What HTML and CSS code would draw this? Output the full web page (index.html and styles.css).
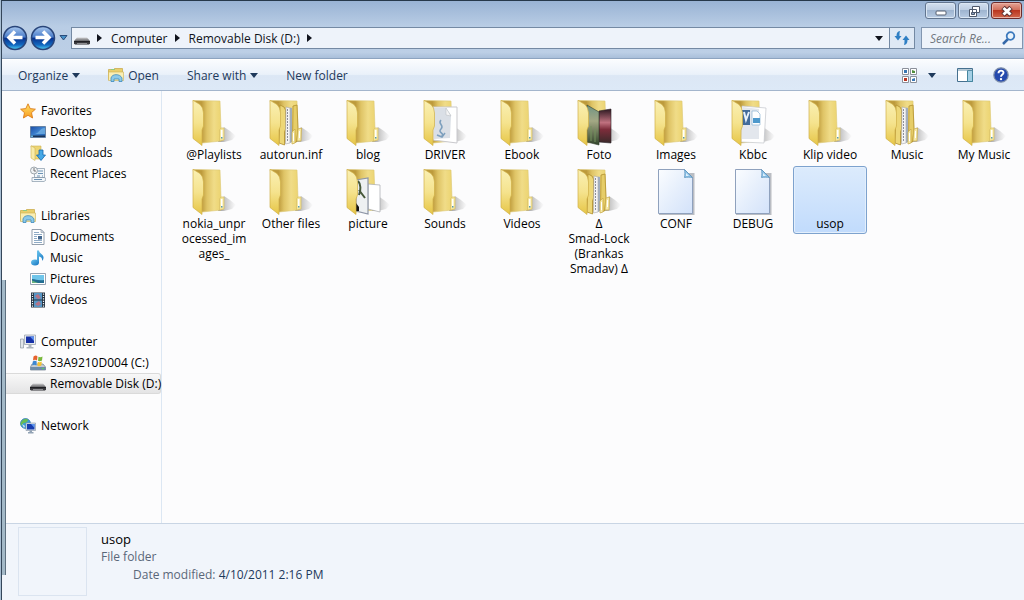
FILE: index.html
```html
<!DOCTYPE html>
<html lang="en">
<head>
<meta charset="utf-8">
<title>Removable Disk (D:)</title>
<link rel="stylesheet" href="styles.css">
</head>
<body>
<svg class="sprite" aria-hidden="true">
  <defs>
    <linearGradient id="gFlap" x1="0" y1="0" x2="0" y2="1"><stop offset="0" stop-color="#faf0b4"/><stop offset=".5" stop-color="#f5e38e"/><stop offset="1" stop-color="#e6c545"/></linearGradient>
    <linearGradient id="gBack" x1="0" y1="0" x2="1" y2="0"><stop offset=".3" stop-color="#bd9a3c"/><stop offset=".5" stop-color="#dfc466"/><stop offset=".75" stop-color="#f0dc88"/><stop offset="1" stop-color="#ecd470"/></linearGradient>
    <linearGradient id="gShade" x1="0" y1="0" x2="1" y2="0"><stop offset="0" stop-color="#666" stop-opacity=".7"/><stop offset=".4" stop-color="#888" stop-opacity=".45"/><stop offset="1" stop-color="#999" stop-opacity="0"/></linearGradient>
    <linearGradient id="gPage" x1="0" y1="0" x2="1" y2="1"><stop offset="0" stop-color="#fbfdff"/><stop offset=".5" stop-color="#e6effc"/><stop offset="1" stop-color="#d3e2fa"/></linearGradient>
    <linearGradient id="gBall" x1="0" y1="0" x2="0" y2="1"><stop offset="0" stop-color="#a9c8ee"/><stop offset=".45" stop-color="#4a7dcb"/><stop offset=".52" stop-color="#08338f"/><stop offset=".8" stop-color="#1268c0"/><stop offset="1" stop-color="#4fd2f5"/></linearGradient>
    <linearGradient id="gDrive" x1="0" y1="0" x2="0" y2="1"><stop offset="0" stop-color="#d0d0d2"/><stop offset=".4" stop-color="#77777a"/><stop offset="1" stop-color="#2c2c30"/></linearGradient>
    <linearGradient id="gScreen" x1="0" y1="0" x2="1" y2="1"><stop offset="0" stop-color="#1c4da6"/><stop offset=".5" stop-color="#3e82cf"/><stop offset="1" stop-color="#1d5fae"/></linearGradient>
    <linearGradient id="gStar" x1="0" y1="0" x2="0" y2="1"><stop offset="0" stop-color="#ffe36a"/><stop offset="1" stop-color="#f79a1e"/></linearGradient>
    <linearGradient id="gNote" x1="0" y1="0" x2="1" y2="1"><stop offset="0" stop-color="#6cc6ef"/><stop offset="1" stop-color="#1272bf"/></linearGradient>
    <linearGradient id="gFoto" x1="0" y1="0" x2="0" y2="1"><stop offset="0" stop-color="#6f9483"/><stop offset=".4" stop-color="#a3a884"/><stop offset="1" stop-color="#32452b"/></linearGradient>
    <linearGradient id="gRose" x1="0" y1="0" x2="0" y2="1"><stop offset="0" stop-color="#2c1820"/><stop offset=".4" stop-color="#c0717f"/><stop offset=".6" stop-color="#7d2d3b"/><stop offset="1" stop-color="#3a2a2a"/></linearGradient>
  </defs>
  <symbol id="back" viewBox="0 0 48 48">
    <path fill="url(#gShade)" d="M28 43 34 28 40 32 46 37 42 41 34 43z"/>
    <path fill="url(#gBack)" stroke="#dcc873" stroke-width=".6" d="M3 1.500 30 2 31 30 31 42 12 44z"/>
  </symbol>
  <symbol id="flap" viewBox="0 0 48 48">
    <path fill="url(#gFlap)" stroke="#d0b047" stroke-width=".7" d="M3 1.300 10 5.500 12.500 9 13.500 14 13.500 27 12 31 12 46.500 3 39.500z"/>
  </symbol>
  <symbol id="folder" viewBox="0 0 48 48">
    <use href="#back"/>
    <path fill="#f4e7a0" stroke="#d8bf60" stroke-width=".7" d="M29.500 42 29.500 31 31 29 34 29 34 41z"/><path fill="#fff" d="M31 31h1.500v8H31z"/><path fill="#5b9bb0" d="M31 38h1.500v1.500H31z"/>
    <use href="#flap"/>
  </symbol>
  <symbol id="folder-full" viewBox="0 0 48 48">
    <use href="#back"/>
    <path fill="#edd777" stroke="#b18f2f" stroke-width=".8" d="M13 6 17 8 18.500 11 18.500 30 17.500 33 17.500 46 12 44z"/>
    <path fill="#f4f4f5" stroke="#aaa" stroke-width=".6" d="M19 8 23 9 23 44 18.500 45z"/><path stroke="#8d8f9a" stroke-dasharray="2 1" d="M20.500 10v32"/>
    <path fill="#a2adba" d="M23 8.500 25 9 25 43 23 44z"/>
    <path fill="#e6cd67" stroke="#b18f2f" stroke-width=".8" d="M26 7 30 6 31 30 29.500 43 25.500 44z"/>
    <path fill="#f6eaaa" stroke="#c9a944" stroke-width=".7" d="M25 33 28 30 28 44 25 45zM31 30 34.500 29 34 42 30 42z"/><path stroke="#fff" d="M26.500 34v8M32.500 32v7"/>
    <use href="#flap"/>
  </symbol>
  <symbol id="folder-driver" viewBox="0 0 48 48">
    <use href="#back"/><path fill="#fff" stroke="#c9c9cd" d="M12 8 36 8 36 44 12 41z"/>
    <path fill="#dadfe6" d="M13 9 25 9 30 16 29 39 13 40z"/><path fill="#f5f5f6" stroke="#b5b8bd" stroke-width=".5" d="M25 9v7l5 1z"/>
    <path fill="none" stroke="#7d9fbd" stroke-width="1.500" d="M20 21c-4 4 4 5 0 9s5 4 0 8M16 36l5 2 3-4"/>
    <use href="#flap"/>
  </symbol>
  <symbol id="folder-foto" viewBox="0 0 48 48">
    <use href="#back"/><path fill="url(#gRose)" stroke="#292026" stroke-width=".6" d="M24 12 36 10 36 44 24 43z"/>
    <path fill="url(#gFoto)" stroke="#31402e" stroke-width=".6" d="M12 6 24 13 24 46 12 43z"/><path stroke="#75915e" d="M16 27v15M20 30v13"/>
    <use href="#flap"/>
  </symbol>
  <symbol id="folder-kbbc" viewBox="0 0 48 48">
    <use href="#back"/><path fill="#fff" stroke="#c3c6cb" stroke-width=".7" d="M13 7 37 9 35 44 12 43z"/>
    <path fill="#e3e7ed" d="M14 8 30 10 30 40 12 40z"/><path fill="#426b9a" d="M13 11h8v15h-8z"/><path fill="none" stroke="#e7f1fb" stroke-width="2" d="M15 13l2 8 3-8"/>
    <path fill="#fff" stroke="#8db5d4" stroke-width=".7" d="M23 12h5l3 3v11h-8z"/><path fill="#4e99cc" d="M24 19h7v5h-7z"/>
    <use href="#flap"/>
  </symbol>
  <symbol id="folder-picture" viewBox="0 0 48 48">
    <use href="#back"/><path fill="#fff" stroke="#a5a8ac" stroke-width=".7" d="M24 16 36 17 36 44 24 41z"/>
    <path fill="#edf0f2" stroke="#8e96a6" stroke-width="1.200" d="M12 12 24 10 24 46 12 43z"/><path fill="none" stroke="#46583a" stroke-width="2" d="M14 13c3 3 3 9 1 14M15 22l6 8"/><path fill="#111" d="M12 35l3 4v4h-3z"/>
    <use href="#flap"/>
  </symbol>
  <symbol id="file" viewBox="0 0 48 48">
    <path fill="#777d89" opacity=".5" d="M7 5h35.500v42H7z"/>
    <path fill="url(#gPage)" stroke="#8fa1bd" d="M6.500 1.500h26l8 8v36h-34z"/>
    <path fill="#8fc3e8" stroke="#5b93bd" stroke-width=".8" d="M32.500 1.500c.5 3 .5 5 0 8 3-.5 5-.5 8 0z"/><path fill="#dff1fc" d="M34 5l3 3h-3z"/>
  </symbol>
  <symbol id="drive" viewBox="0 0 16 16"><path fill="url(#gDrive)" d="M3 7.500h10l3 3.500v2.500l-1 1H1l-1-1V11z"/><path fill="#202024" d="M0 11h16v1.500H0z"/><path fill="#8c8c90" d="M3 13h10v1.500H3z"/></symbol>
  <symbol id="library" viewBox="0 0 16 16">
    <path fill="#e9cf6c" stroke="#c5a645" stroke-width=".7" d="M.500 2.500h5l1-1h8v11H.500z"/><path fill="#8fc97e" d="M3 2h4v1H3z"/><path fill="#faeeb4" stroke="#cdb050" stroke-width=".6" d="M.500 5h15v8.500H.500z"/>
    <path fill="#8cc9e9" stroke="#3c8abb" stroke-width=".8" d="M3 14.500V11c1-4.500 9-4.500 11 0v3.500h-3V12H6v2.500z"/>
  </symbol>
  <symbol id="star" viewBox="0 0 16 16"><path fill="url(#gStar)" stroke="#dd7d1b" stroke-width=".9" d="M8 .8 10.200 5.600 15.400 6.200 11.500 9.700 12.600 15 8 12.300 3.400 15 4.500 9.700.600 6.200 5.800 5.600z"/></symbol>
  <symbol id="desktop" viewBox="0 0 16 16"><path fill="url(#gScreen)" stroke="#6682a5" d="M.500 2.500h15v11H.500z"/><path fill="#79b8e8" opacity=".7" d="M15 4c-5 0-6 5-10 6h10z"/><path fill="#1a3458" d="M1 11.500h14V13H1z"/><path fill="#63b4de" d="M1 11.500h2V13H1z"/></symbol>
  <symbol id="downloads" viewBox="0 0 16 16"><path fill="#edd573" stroke="#cdb255" stroke-width=".6" d="M1 1h10v13H4z"/><path fill="#f8eba9" stroke="#cdb255" stroke-width=".6" d="M1 .8 5 3v12.500L1 13z"/><path fill="#45a8e6" stroke="#1467ad" stroke-width=".8" d="M9 5h4v5h2.500L11 15.500 6.500 10H9z"/></symbol>
  <symbol id="recent" viewBox="0 0 16 16"><path fill="#f3f7fa" stroke="#8596a7" stroke-width=".7" d="M4.500 2.500h10v9h-10zM2 11.500h13l1 2.500-2 1.500H2z"/><path stroke="#6b92b4" d="M8 5h5M8 7.500h5M7 10h3M12 10h1M4 13.500h8"/><circle cx="4" cy="4.500" r="3.500" fill="#eef1f3" stroke="#89939b" stroke-width=".8"/><path fill="none" stroke="#555" stroke-width=".8" d="M4 2v3h2"/></symbol>
  <symbol id="documents" viewBox="0 0 16 16"><path fill="#fff" stroke="#8995a4" stroke-width=".9" d="M2 .5h9l3 3v12H2z"/><path fill="#d5dde5" stroke="#8995a4" stroke-width=".6" d="M11 .5v3h3z"/><path stroke="#8fabc6" d="M4 3.500h5M4 5.500h8M4 7.500h3M4 9.500h3M4 11.500h8M4 13.500h8"/><path fill="#44688f" d="M8 7h4v3.500H8z"/></symbol>
  <symbol id="music" viewBox="0 0 16 16"><path fill="url(#gNote)" d="M7 .5h2c0 3 5 4 4.500 7.500 0 1-.5 2-1.500 3 .5-3-1-4-3-4.500v6.500H7z"/><ellipse cx="5" cy="12.500" rx="4" ry="3" fill="url(#gNote)"/></symbol>
  <symbol id="pictures" viewBox="0 0 16 16"><path fill="#fff" stroke="#8a98a8" stroke-width=".9" d="M.500 2.500h15v11H.500z"/><path fill="#6fc5ea" d="M2 4h12v8H2z"/><path fill="#226d91" d="M2 8c4 0 6 2 12 1v3H2z"/><path fill="#6ab480" d="M2 9.500l6 2.500H2z"/></symbol>
  <symbol id="videos" viewBox="0 0 16 16"><path fill="#263442" d="M1 .5h14v15H1z"/><path fill="#5696c5" d="M4 1h8v6.500H4zM4 8.500h8V15H4z"/><path fill="#b67386" d="M5 4l3-2 3 4-3 1zM5 12l4-3 2 3-3 2z"/><path stroke="#eef3f7" stroke-width="1.200" stroke-dasharray="1.200 1.200" d="M2.500 1.500v14M13.500 1.500v14"/></symbol>
  <symbol id="computer" viewBox="0 0 16 16"><path fill="#e1e5e9" stroke="#8e98a3" stroke-width=".7" d="M.500 5h3v9h-3z"/><path fill="#e8ecf0" stroke="#929ba6" stroke-width=".7" d="M4.500 1h11v9.500h-11z"/><path fill="#1731a8" d="M6 2.500h8V9H6z"/><path fill="#5b8ef0" d="M10 2.500h4V7z"/><path fill="#adb5be" d="M8.500 11h3v2h2v1.500h-7V13h2z"/></symbol>
  <symbol id="system" viewBox="0 0 16 16"><path fill="#c3cbd2" stroke="#6e7d8b" stroke-width=".7" d="M2 9h11l2.500 3v3H.500v-3z"/><path fill="#6f8ca8" d="M.500 12h15v3H.500z"/><path fill="#56cf61" d="M12 13h2v1h-2z"/><path fill="#e6622d" d="M3.500 1.500c2-1.500 3-1 4 0l-.5 4c-1-1-3-1-4 0z"/><path fill="#78b83b" d="M8.500 1.800c1 .7 3 .5 4-.3l-.5 4c-1 .8-3 1-4 .3z"/><path fill="#3c87d2" d="M2.800 6.500c1-1 3-1 4 0l-.5 4c-1-1-3-1-4 0z"/><path fill="#f5c232" d="M7.800 6.800c1 .7 3 .5 4-.3l-.5 4c-1 .8-3 1-4 .3z"/></symbol>
  <symbol id="network" viewBox="0 0 16 16"><circle cx="5.500" cy="5.500" r="5" fill="#3b9cda" stroke="#23689e" stroke-width=".6"/><path fill="#68bd54" d="M2 3c2-3 6-2 6-1S6 5 4 5 2 9 1 7s0-3 1-4z"/><path fill="#dee8ee" d="M2 6l3 2-1 2z"/><path fill="#dbe4ed" stroke="#8391a3" stroke-width=".6" d="M6 5h9.500v7.500H6z"/><path fill="#183dae" d="M7 6h7.500v5.500H7z"/><path fill="#5b95ef" d="M11 6h3.500v4z"/><path fill="#91a2b4" d="M9.500 12.500h2.500V14h1.500v1.500H8V14h1.500z"/></symbol>
  <symbol id="down" viewBox="0 0 8 5"><path fill="currentColor" d="M0 0h8L4 5z"/></symbol>
  <symbol id="right" viewBox="0 0 5 8"><path fill="currentColor" d="M0 0l5 4-5 4z"/></symbol>
</svg>

<div class="window">
  <header class="glass">
    <div class="caption">
      <button class="cap" aria-label="Minimize"><svg width="30" height="16" viewBox="0 0 30 16"><rect x="10" y="8" width="10" height="4" rx="1" fill="#fff" stroke="#555f70"/></svg></button>
      <button class="cap" aria-label="Restore"><svg width="30" height="16" viewBox="0 0 30 16"><path fill="#fff" stroke="#4d586b" d="M13.500 3.500h7v6h-7zM10.500 6.500h7v7h-7z"/><path fill="#8fa3bf" stroke="#4d586b" d="M12.500 9.500h3v2h-3z"/></svg></button>
      <button class="cap close" aria-label="Close"><svg width="30" height="16" viewBox="0 0 30 16"><path stroke="#5d3030" stroke-width="5" d="M11 4.500l8 7.500M19 4.500l-8 7.500"/><path stroke="#fff" stroke-width="3" d="M11.500 5l7 6.500M18.500 5l-7 6.500"/></svg></button>
    </div>
    <div class="navrow">
      <div class="travel">
        <button aria-label="Back"><svg width="26" height="26" viewBox="0 0 26 26"><circle cx="13" cy="13" r="11.500" fill="url(#gBall)" stroke="#29457a" stroke-width="1.500"/><path fill="none" stroke="#fff" stroke-width="3.500" d="M20.500 12.500H8M13 6.500l-6 6 6 6"/></svg></button>
        <button aria-label="Forward"><svg width="26" height="26" viewBox="0 0 26 26"><circle cx="13" cy="13" r="11.500" fill="url(#gBall)" stroke="#29457a" stroke-width="1.500"/><path fill="none" stroke="#fff" stroke-width="3.500" d="M5.500 12.500H18M13 6.500l6 6-6 6"/></svg></button>
        <button class="recent" aria-label="Recent pages"><svg width="9" height="6" viewBox="0 0 9 6"><path fill="#4791c8" stroke="#2a4d7c" d="M1 .5h7L4.500 5z"/></svg></button>
      </div>
      <nav class="address" aria-label="Address">
        <svg class="i16"><use href="#drive"/></svg>
        <svg class="right"><use href="#right"/></svg>
        <a href="#computer">Computer</a>
        <svg class="right"><use href="#right"/></svg>
        <a href="#disk">Removable Disk (D:)</a>
        <svg class="right"><use href="#right"/></svg>
        <button class="prev" aria-label="Previous locations"><svg class="down"><use href="#down"/></svg></button>
        <button class="refresh" aria-label="Refresh"><svg width="16" height="16" viewBox="0 0 16 16"><path fill="#2f7fc4" d="M6 1C3.500 1.500 2.500 3 2.500 6H.5l3.500 4.500L7.500 6h-2c0-2 0-3.500.5-5zM10 15c2.500-.5 3.500-2 3.500-5h2L12 5.500 8.500 10h2c0 2 0 3.500-.5 5z"/></svg></button>
      </nav>
      <div class="search">
        <input type="text" placeholder="Search Re..." aria-label="Search">
        <svg width="14" height="14" viewBox="0 0 14 14"><path stroke="#3569a9" stroke-width="2.500" d="M1 13l5-5"/><circle cx="8.500" cy="5" r="3.800" fill="#eaf4fc" stroke="#3c79bd" stroke-width="1.800"/></svg>
      </div>
    </div>
  </header>

  <div class="toolbar">
    <button class="t-organize">Organize <svg class="down"><use href="#down"/></svg></button>
    <button class="t-open"><svg class="i16"><use href="#library"/></svg>Open</button>
    <button class="t-share">Share with <svg class="down"><use href="#down"/></svg></button>
    <button class="t-new">New folder</button>
    <span class="spring"></span>
    <button class="t-view" aria-label="Change view"><svg width="15" height="15" viewBox="0 0 15 15"><path fill="#fff" stroke="#8b909a" d="M.500.500h6v6h-6zM8.500.500h6v6h-6zM.500 8.500h6v6h-6zM8.500 8.500h6v6h-6z"/><path fill="#3977b4" d="M2 2h3v3H2zM10 11l3-1v3h-3z"/><path fill="#4f8e3d" d="M10 2l3 1v2h-3z"/><path fill="#b93422" d="M2 10h3v3H2z"/></svg><svg class="down"><use href="#down"/></svg></button>
    <button class="t-pane" aria-label="Preview pane"><svg width="16" height="14" viewBox="0 0 16 14"><path fill="#fff" stroke="#45708f" d="M.500.500h15v13H.500z"/><path fill="#a4cfe5" stroke="#45869f" d="M10.500 2.500h5v11h-5z"/><path stroke="#6a93ad" d="M1 2h14"/></svg></button>
    <button class="t-help" aria-label="Help"><svg width="16" height="16" viewBox="0 0 16 16"><circle cx="8" cy="8" r="7.200" fill="#2449ad" stroke="#7e8ea9" stroke-width="1.200"/><path fill="none" stroke="#fff" stroke-width="1.900" d="M5.500 6.200c0-3.500 5.200-3.300 5-.4C10.400 7.500 8 7.500 8 9.800"/><circle cx="8" cy="12.100" r="1.200" fill="#fff"/></svg></button>
  </div>

  <div class="main">
    <nav class="tree" aria-label="Folders">
      <section>
        <a class="root" href="#fav"><svg class="i16"><use href="#star"/></svg>Favorites</a>
        <a href="#desk"><svg class="i16"><use href="#desktop"/></svg>Desktop</a>
        <a href="#dl"><svg class="i16"><use href="#downloads"/></svg>Downloads</a>
        <a href="#rp"><svg class="i16"><use href="#recent"/></svg>Recent Places</a>
      </section>
      <section>
        <a class="root" href="#lib"><svg class="i16"><use href="#library"/></svg>Libraries</a>
        <a href="#doc"><svg class="i16"><use href="#documents"/></svg>Documents</a>
        <a href="#mus"><svg class="i16"><use href="#music"/></svg>Music</a>
        <a href="#pic"><svg class="i16"><use href="#pictures"/></svg>Pictures</a>
        <a href="#vid"><svg class="i16"><use href="#videos"/></svg>Videos</a>
      </section>
      <section>
        <a class="root" href="#comp"><svg class="i16"><use href="#computer"/></svg>Computer</a>
        <a href="#c"><svg class="i16"><use href="#system"/></svg>S3A9210D004 (C:)</a>
        <a class="current" href="#d"><svg class="i16"><use href="#drive"/></svg>Removable Disk (D:)</a>
      </section>
      <section>
        <a class="root" href="#net"><svg class="i16"><use href="#network"/></svg>Network</a>
      </section>
    </nav>

    <main class="files">
      <button class="item"><svg><use href="#folder"/></svg><span>@Playlists</span></button>
      <button class="item"><svg><use href="#folder-full"/></svg><span>autorun.inf</span></button>
      <button class="item"><svg><use href="#folder"/></svg><span>blog</span></button>
      <button class="item"><svg><use href="#folder-driver"/></svg><span>DRIVER</span></button>
      <button class="item"><svg><use href="#folder"/></svg><span>Ebook</span></button>
      <button class="item"><svg><use href="#folder-foto"/></svg><span>Foto</span></button>
      <button class="item"><svg><use href="#folder"/></svg><span>Images</span></button>
      <button class="item"><svg><use href="#folder-kbbc"/></svg><span>Kbbc</span></button>
      <button class="item"><svg><use href="#folder"/></svg><span>Klip video</span></button>
      <button class="item"><svg><use href="#folder-full"/></svg><span>Music</span></button>
      <button class="item"><svg><use href="#folder"/></svg><span>My Music</span></button>
      <button class="item"><svg><use href="#folder"/></svg><span>nokia_unpr<wbr>ocessed_im<wbr>ages_</span></button>
      <button class="item"><svg><use href="#folder"/></svg><span>Other files</span></button>
      <button class="item"><svg><use href="#folder-picture"/></svg><span>picture</span></button>
      <button class="item"><svg><use href="#folder"/></svg><span>Sounds</span></button>
      <button class="item"><svg><use href="#folder"/></svg><span>Videos</span></button>
      <button class="item"><svg><use href="#folder-full"/></svg><span>Δ<br>Smad-Lock<br>(Brankas<br>Smadav) Δ</span></button>
      <button class="item"><svg><use href="#file"/></svg><span>CONF</span></button>
      <button class="item"><svg><use href="#file"/></svg><span>DEBUG</span></button>
      <button class="item selected"><svg></svg><span>usop</span></button>
    </main>
  </div>

  <footer class="details">
    <div class="thumb"></div>
    <div class="meta">
      <div class="name">usop</div>
      <div class="kind">File folder</div>
      <div class="date"><span>Date modified:</span> 4/10/2011 2:16 PM</div>
    </div>
  </footer>
</div>
</body>
</html>
```
FILE: styles.css
```css
* { box-sizing: border-box; }
body {
  margin: 0;
  font: 12px/15px "Open Sans", "Noto Sans", sans-serif;
  color: #000;
  background: #a9bfd4;
}
button {
  margin: 0; padding: 0; border: 0; background: none;
  font: inherit; color: inherit;
}
a { color: inherit; text-decoration: none; }
svg { display: block; flex: none; }
.sprite { position: absolute; width: 0; height: 0; }
.i16 { width: 16px; height: 16px; }
.down { width: 8px; height: 5px; }
.right { width: 5px; height: 8px; }

.window {
  position: relative;
  display: flex; flex-direction: column;
  min-height: 100vh;
  margin-left: 1px;
  border-left: 1px solid #34465a;
  border-top: 1px solid #26384a;
  background: #fcfcfd;
}
/* edge of the window behind, seen over the lower left frame */
.window::after {
  content: "";
  position: absolute; left: 0; top: 279px; bottom: 25px; width: 3px;
  background: #a3b9c8;
  border-right: 1px solid #5d7080;
}

.glass {
  height: 58px;
  background: linear-gradient(#99b3d4, #b9cde5 45%, #bccfe6 90%, #a9bfda);
  border-bottom: 1px solid #8da4c0;
}
.caption { display: flex; justify-content: flex-end; gap: 2px; padding: 1px 2px 0 0; }
.cap {
  width: 31px; height: 17px;
  display: flex; align-items: center; justify-content: center;
  border: 1px solid #62758f; border-radius: 3px;
  background: linear-gradient(#d3e0ef, #bccde2 48%, #9fb5d0 50%, #b9cce3);
  box-shadow: inset 0 0 0 1px #dbe7f4;
}
.close {
  border-color: #6d2b2b;
  background: linear-gradient(#e5a396, #d06c58 48%, #ba3620 50%, #d2674d);
  box-shadow: inset 0 0 0 1px #e9b3a6;
}
.navrow { display: flex; align-items: center; padding: 6px 1px 0 0; }
.travel {
  display: flex; align-items: center; gap: 2px;
  width: 69px;
}
.recent { margin-left: 1px; }
.address {
  flex: 1;
  display: flex; align-items: center;
  height: 22px; padding-left: 2px;
  color: #10131c;
  background: #eef3fa;
  border: 1px solid #7489a3;
}
.address .i16 { margin-right: 7px; }
.address a { margin: 0 7px 0 9px; }
.prev { margin-left: auto; padding: 0 6px; }
.refresh {
  align-self: stretch; width: 25px;
  display: flex; align-items: center; justify-content: center;
  border-left: 1px solid #7489a3;
  background: #dfe9f5;
}
.search {
  display: flex; align-items: center;
  width: 102px; height: 22px; margin-left: 6px; padding: 0 6px 0 8px;
  background: #eef3fa;
  border: 1px solid #8296b0;
}
.search input {
  flex: 1; min-width: 0; padding: 0;
  border: 0; outline: 0; background: none;
  font: italic 12px/15px "Open Sans", "Noto Sans", sans-serif;
}
.search input::placeholder { color: #727880; opacity: 1; }

.toolbar {
  display: flex; align-items: center;
  height: 32px; padding: 0 15px 0 16px;
  color: #1e395b;
  border-top: 1px solid #fff;
  border-bottom: 1px solid #a3b5cc;
  background: linear-gradient(#fafcfe, #eaf1fa 48%, #dce7f5 52%, #dde9f7);
}
.toolbar button { display: flex; align-items: center; gap: 4px; }
.t-open { margin-left: 28px; }
.t-share { margin-left: 28px; }
.t-new { margin-left: 28px; }
.toolbar .t-view { gap: 11px; }
.t-pane { margin-left: 21px; }
.t-help { margin-left: 20px; }
.spring { flex: 1; }

.main { flex: 1; display: flex; }
.tree {
  flex: none; width: 160px;
  display: flex; flex-direction: column; gap: 21px;
  padding-top: 9px;
  border-right: 1px solid #dce7f3;
}
.tree a {
  display: flex; align-items: center; gap: 4px;
  height: 21px; margin-left: 3px; padding-left: 24px;
  border: 1px solid transparent;
  white-space: nowrap;
}
.tree a.root { gap: 5px; padding-left: 14px; }
.tree a.current {
  border-color: #dadada; border-left: 0; padding-left: 25px;
  border-radius: 0 3px 3px 0;
  background: linear-gradient(#f8f8f8, #e4e4e5);
}

.files {
  flex: 1;
  display: grid; grid-template-columns: repeat(auto-fill, 77px);
  grid-auto-rows: min-content; row-gap: 1px;
  align-content: start;
  padding: 6px 0 0 13px;
}
.item {
  display: flex; flex-direction: column; align-items: center;
  align-self: start;
  margin: 0 1px 0 2px; padding: 1px 0 2px;
  border: 1px solid transparent; border-radius: 3px;
  text-align: center;
}
.item svg { width: 48px; height: 48px; }
.item.selected {
  border-color: #7da2ce;
  background: linear-gradient(#dcebfc, #c1dbfc);
  box-shadow: inset 0 0 0 1px #e3effc;
}

.details {
  display: flex; gap: 14px;
  height: 77px; padding: 3px 16px 0;
  border-top: 1px solid #c9d5e4;
  background: #f1f5fb;
}
.thumb { width: 69px; height: 69px; border: 1px solid #dbe4f0; }
.meta { color: #5a6779; line-height: 18px; padding-top: 3px; }
.name { color: #000; font-size: 13px; }
.date { padding-left: 32px; color: #1e395b; }
.date span { color: #5a6779; }
```
